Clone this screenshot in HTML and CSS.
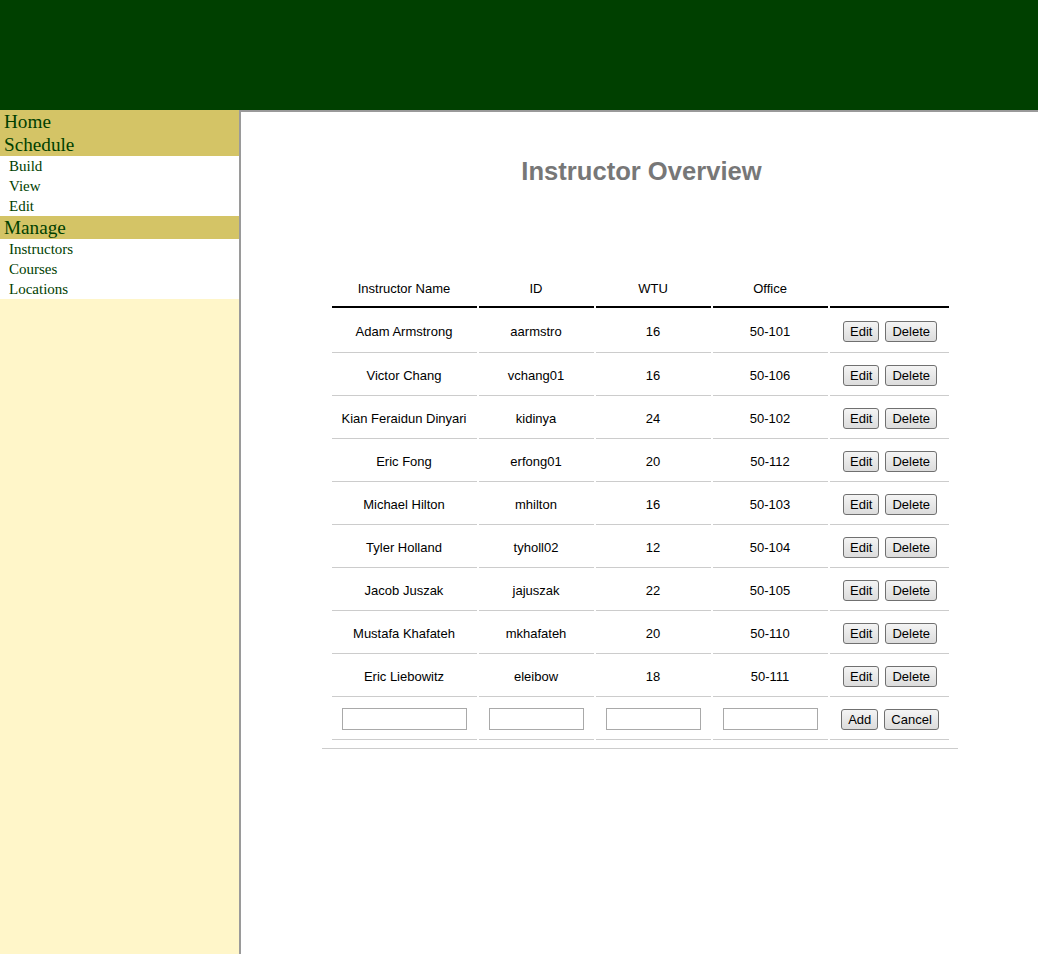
FILE: index.html
```html
<!DOCTYPE html>
<html>
<head>
<meta charset="utf-8">
<title>Instructor Overview</title>
<link rel="stylesheet" href="styles.css">
</head>
<body>
<div class="page">
  <header class="topbar"></header>
  <div class="body">
    <nav class="sidebar">
      <div class="nav-head">Home</div>
      <div class="nav-head">Schedule</div>
      <div class="nav-group">
        <div class="nav-item">Build</div>
        <div class="nav-item">View</div>
        <div class="nav-item">Edit</div>
      </div>
      <div class="nav-head">Manage</div>
      <div class="nav-group">
        <div class="nav-item">Instructors</div>
        <div class="nav-item">Courses</div>
        <div class="nav-item">Locations</div>
      </div>
    </nav>
    <main class="main">
      <h1 class="title">Instructor Overview</h1>
      <div class="table-wrap">
        <table class="grid">
          <colgroup>
            <col class="c1"><col class="c2"><col class="c3"><col class="c4"><col class="c5">
          </colgroup>
          <thead>
            <tr><th>Instructor Name</th><th>ID</th><th>WTU</th><th>Office</th><th></th></tr>
          </thead>
          <tbody>
            <tr class="first-row"><td>Adam Armstrong</td><td>aarmstro</td><td>16</td><td>50-101</td><td><div class="btns"><button class="btn">Edit</button><button class="btn">Delete</button></div></td></tr>
            <tr><td>Victor Chang</td><td>vchang01</td><td>16</td><td>50-106</td><td><div class="btns"><button class="btn">Edit</button><button class="btn">Delete</button></div></td></tr>
            <tr><td>Kian Feraidun Dinyari</td><td>kidinya</td><td>24</td><td>50-102</td><td><div class="btns"><button class="btn">Edit</button><button class="btn">Delete</button></div></td></tr>
            <tr><td>Eric Fong</td><td>erfong01</td><td>20</td><td>50-112</td><td><div class="btns"><button class="btn">Edit</button><button class="btn">Delete</button></div></td></tr>
            <tr><td>Michael Hilton</td><td>mhilton</td><td>16</td><td>50-103</td><td><div class="btns"><button class="btn">Edit</button><button class="btn">Delete</button></div></td></tr>
            <tr><td>Tyler Holland</td><td>tyholl02</td><td>12</td><td>50-104</td><td><div class="btns"><button class="btn">Edit</button><button class="btn">Delete</button></div></td></tr>
            <tr><td>Jacob Juszak</td><td>jajuszak</td><td>22</td><td>50-105</td><td><div class="btns"><button class="btn">Edit</button><button class="btn">Delete</button></div></td></tr>
            <tr><td>Mustafa Khafateh</td><td>mkhafateh</td><td>20</td><td>50-110</td><td><div class="btns"><button class="btn">Edit</button><button class="btn">Delete</button></div></td></tr>
            <tr><td>Eric Liebowitz</td><td>eleibow</td><td>18</td><td>50-111</td><td><div class="btns"><button class="btn">Edit</button><button class="btn">Delete</button></div></td></tr>
            <tr class="add-row">
              <td><input class="field field-wide" type="text"></td>
              <td><input class="field" type="text"></td>
              <td><input class="field" type="text"></td>
              <td><input class="field" type="text"></td>
              <td><div class="btns"><button class="btn">Add</button><button class="btn">Cancel</button></div></td>
            </tr>
          </tbody>
        </table>
      </div>
    </main>
  </div>
</div>
</body>
</html>
```

FILE: styles.css
```css
html, body {
  margin: 0;
  padding: 0;
  height: 100%;
}

body {
  font-family: "Liberation Sans", Arial, sans-serif;
  background: #ffffff;
}

.page {
  display: flex;
  flex-direction: column;
  min-height: 100vh;
}

.topbar {
  height: 110px;
  background: #004000;
  flex: none;
}

.body {
  display: flex;
  flex: 1;
}

.sidebar {
  width: 239px;
  flex: none;
  background: #fff6c9;
  font-family: "Liberation Serif", "Times New Roman", serif;
  color: #004000;
}

.nav-head {
  background: #d4c466;
  font-size: 19.2px;
  line-height: 23px;
  padding-left: 4px;
}

.nav-group {
  background: #ffffff;
}

.nav-item {
  font-size: 15px;
  line-height: 20px;
  padding-left: 9px;
}

.main {
  flex: 1;
  border-top: 2px solid #9a9a9a;
  border-left: 2px solid #9a9a9a;
  background: #ffffff;
  display: flex;
  flex-direction: column;
  align-items: center;
}

.title {
  margin: 0;
  padding-top: 44px;
  padding-left: 4px;
  font-size: 25.6px;
  line-height: 30px;
  font-weight: bold;
  color: #777777;
  text-align: center;
}

.table-wrap {
  margin-top: 82px;
  width: 620px;
  padding: 0 8px 6px;
  border-bottom: 1px solid #cccccc;
}

.grid {
  width: 100%;
  border-collapse: separate;
  border-spacing: 2px 2px;
  table-layout: fixed;
  font-size: 13px;
  color: #000000;
}

.c1 { width: 145px; }
.c2 { width: 115px; }
.c3 { width: 115px; }
.c4 { width: 115px; }
.c5 { width: 119px; }

.grid th {
  font-weight: normal;
  height: 36px;
  padding: 0;
  border-bottom: 2px solid #000000;
  text-align: center;
  vertical-align: middle;
}

.grid td {
  height: 40px;
  padding: 0;
  border-bottom: 1px solid #cccccc;
  text-align: center;
  vertical-align: middle;
  white-space: nowrap;
}

.grid .first-row td {
  height: 41px;
  padding-top: 1px;
}

.btns {
  display: flex;
  justify-content: center;
  gap: 6px;
  padding-left: 2px;
}

.btn {
  font-family: "Liberation Sans", Arial, sans-serif;
  font-size: 13px;
  line-height: 15px;
  height: 21px;
  padding: 0 6px;
  color: #000000;
  border: 1px solid #707070;
  border-radius: 3px;
  background: linear-gradient(#f4f4f4, #dcdcdc);
  margin: 0;
}

.field {
  box-sizing: border-box;
  width: 95px;
  height: 22px;
  border: 1px solid #a9a9a9;
  padding: 1px 2px;
  font-family: "Liberation Sans", Arial, sans-serif;
  font-size: 13px;
  margin: 0;
  background: #ffffff;
}

.field-wide {
  width: 125px;
}
```
